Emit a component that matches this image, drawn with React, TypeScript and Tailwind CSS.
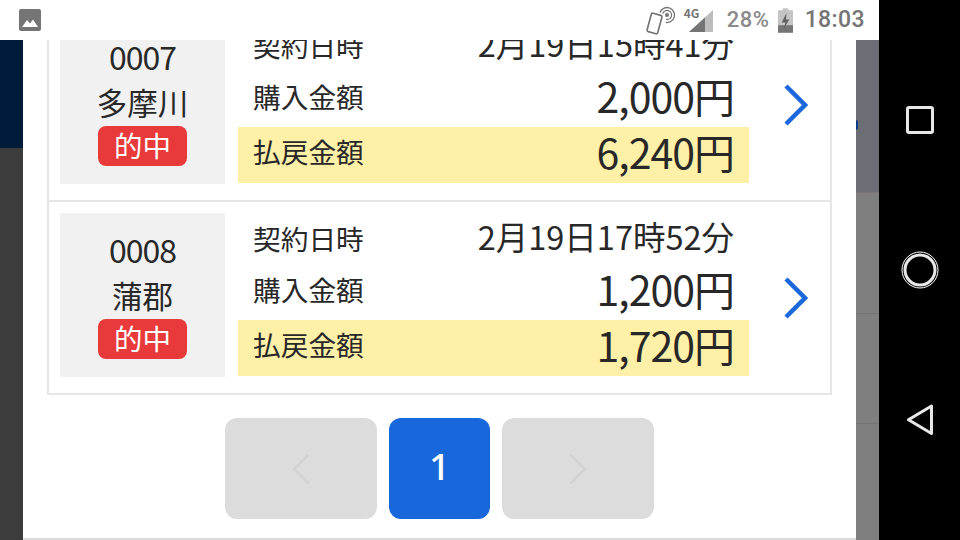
import React from "react";

const F = "font-['Noto_Sans_CJK_JP','Noto_Sans',sans-serif]";

function Chevron({ className, stroke, sw = 4.5 }: { className?: string; stroke: string; sw?: number }) {
  return (
    <svg viewBox="0 0 24 42" className={className} fill="none">
      <path d="M2 2 L21 21 L2 40" stroke={stroke} strokeWidth={sw} />
    </svg>
  );
}

function Row({ no, place, date, buy, pay }: { no: string; place: string; date: string; buy: string; pay: string }) {
  return (
    <div className="h-[193px] shrink-0 border-b-2 border-[#e6e6e6] flex items-stretch pl-[11px] pt-[11px] pb-[15px]">
      <div className="w-[165px] h-[164px] bg-[#f1f1f1] flex flex-col items-center pt-[14px] text-[#282828]">
        <div className="text-[32px] leading-[44px] tracking-[-1px]">{no}</div>
        <div className="text-[30.5px] leading-[44px] mt-[2px] whitespace-nowrap">{place}</div>
        <div className="h-[40px] w-[89px] rounded-[8px] bg-[#e83a3a] text-white text-[28.5px] leading-[38px] text-center mt-[2px]">的中</div>
      </div>
      <div className="w-[511px] ml-[13px] flex flex-col text-[#282828]">
        <div className="h-[52px] flex items-center justify-between px-[15px]">
          <span className="text-[27.7px] leading-[40px] mb-[3px]">契約日時</span>
          <span className="text-[32.5px] leading-[40px] mb-[6px] whitespace-nowrap">{date}</span>
        </div>
        <div className="h-[55px] flex items-center justify-between px-[15px]">
          <span className="text-[27.7px] leading-[40px] mb-[8px]">購入金額</span>
          <span className="text-[41px] leading-[50px] mb-[10px] tracking-[-1px]">{buy}</span>
        </div>
        <div className="h-[56px] bg-[#fff0a8] flex items-center justify-between px-[15px]">
          <span className="text-[27.7px] leading-[40px] mb-[8px]">払戻金額</span>
          <span className="text-[41px] leading-[50px] mb-[9px] tracking-[-1px]">{pay}</span>
        </div>
      </div>
      <div className="flex-1 flex items-center justify-center pl-[13px] pt-[4px]">
        <Chevron className="w-[24px] h-[42px]" stroke="#1a68db" />
      </div>
    </div>
  );
}

export default function App() {
  return (
    <div className={`w-[960px] h-[540px] flex overflow-hidden bg-black ${F}`}>
      <div className="w-[879px] h-full flex flex-col">
        <div className="h-[40px] shrink-0 bg-white flex items-center pl-[19px] pr-[14px]">
          <svg viewBox="0 0 22 22" className="w-[22px] h-[22px]">
            <rect width="22" height="22" rx="2" fill="#757575" />
            <path d="M3 18 L8 11 L11 14.5 L14 10.5 L19 18 Z" fill="#fff" />
          </svg>
          <div className="ml-auto flex items-center text-[#757575]">
            <svg viewBox="0 0 32 32" className="w-[32px] h-[32px] mt-[2px]" fill="none" stroke="#757575">
              <rect x="5" y="9" width="11" height="19" rx="1.5" transform="rotate(15 10.5 18.5)" strokeWidth="1.7" />
              <circle cx="23" cy="10" r="2" fill="#757575" stroke="none" />
              <path d="M18.8 8.5A4.5 4.5 0 1 1 22.2 14.4" strokeWidth="1.3" />
              <path d="M16 7.4A7.5 7.5 0 1 1 21.7 17.4" strokeWidth="1.3" />
            </svg>
            <div className="relative w-[30px] h-[30px] ml-[8px]">
              <span className="absolute left-[0px] top-[0px] text-[12px] leading-[16px] font-bold text-[#757575]">4G</span>
              <svg viewBox="0 0 30 30" className="w-[30px] h-[30px]">
                <path d="M5 27 L29 5 V27 Z" fill="#bdbdbd" />
                <path d="M5 27 L21 12.4 V27 Z" fill="#757575" />
              </svg>
            </div>
            <span className="ml-[13px] text-[22px] leading-[24px] font-['Roboto',sans-serif] font-medium text-[#8a8a8a] tracking-[0.6px]">28%</span>
            <svg viewBox="0 0 16 26" className="w-[15px] h-[25px] ml-[8px]">
              <path d="M5 0 H11 V2 H16 V26 H0 V2 H5 Z" fill="#c4c4c4" />
              <path d="M0 18 H16 V26 H0 Z" fill="#757575" />
              <path d="M9 5 L4 15 H8 L6 22 L12 12 H8.5 Z" fill="#5f5f5f" />
            </svg>
            <span className="ml-[12px] text-[23px] leading-[24px] font-['Roboto',sans-serif] font-medium text-[#757575] tracking-[0.4px]">18:03</span>
          </div>
        </div>
        <div className="flex-1 min-h-0 flex">
          <div className="w-[23px] flex flex-col">
            <div className="h-[108px] bg-[#011b3a]" />
            <div className="flex-1 bg-[#3c3c3c]" />
          </div>
          <div className="w-[833px] bg-white flex flex-col justify-end overflow-hidden pl-[24px] pr-[24px] pb-[19px] border-b-2 border-[#dddddd]">
            <div className="border-l-2 border-r-2 border-[#e6e6e6] flex flex-col justify-end min-h-0 overflow-hidden">
              <Row no="0007" place="多摩川" date="2月19日15時41分" buy="2,000円" pay="6,240円" />
              <Row no="0008" place="蒲郡" date="2月19日17時52分" buy="1,200円" pay="1,720円" />
            </div>
            <div className="h-[101px] mt-[23px] shrink-0 flex justify-center gap-[12px]">
              <div className="w-[152px] rounded-[12px] bg-[#dcdcdc] flex items-center justify-center">
                <Chevron className="w-[18px] h-[34px] rotate-180" stroke="#d2d2d2" sw={3.5} />
              </div>
              <div className="w-[101px] rounded-[12px] bg-[#1868db] flex items-center justify-center pb-[5px] text-white text-[37px] font-medium font-['Noto_Sans',sans-serif]">1</div>
              <div className="w-[152px] rounded-[12px] bg-[#dcdcdc] flex items-center justify-center">
                <Chevron className="w-[18px] h-[34px]" stroke="#d2d2d2" sw={3.5} />
              </div>
            </div>
          </div>
          <div className="w-[23px] flex flex-col">
            <div className="h-[153px] bg-[#6b6e75] border-b border-[#7b7674] relative">
              <div className="absolute left-0 top-[80px] w-[2px] h-[10px] rounded-r-full bg-[#0c3b87]" />
            </div>
            <div className="h-[121px] bg-[#7f7f7f] border-b border-[#747474]" />
            <div className="h-[110px] bg-[#7f7f7f] border-b border-[#747474]" />
            <div className="flex-1 bg-[#7f7f7f]" />
          </div>
        </div>
      </div>
      <div className="flex-1 flex flex-col items-center bg-black">
        <svg viewBox="0 0 28 28" className="w-[28px] h-[28px] mt-[106px]" fill="none">
          <rect x="1.5" y="1.5" width="25" height="25" rx="1.5" stroke="#e8e8e8" strokeWidth="3" />
        </svg>
        <svg viewBox="0 0 38 38" className="w-[38px] h-[38px] mt-[117px]" fill="none">
          <circle cx="19" cy="19" r="18" stroke="#fff" strokeWidth="1" />
          <circle cx="19" cy="19" r="15" stroke="#e8e8e8" strokeWidth="3" />
        </svg>
        <svg viewBox="0 0 28 32" className="w-[28px] h-[32px] mt-[115px]" fill="none">
          <path d="M25.5 2 V29.5 L2.5 15.8 Z" stroke="#e8e8e8" strokeWidth="3" strokeLinejoin="round" />
        </svg>
      </div>
    </div>
  );
}
